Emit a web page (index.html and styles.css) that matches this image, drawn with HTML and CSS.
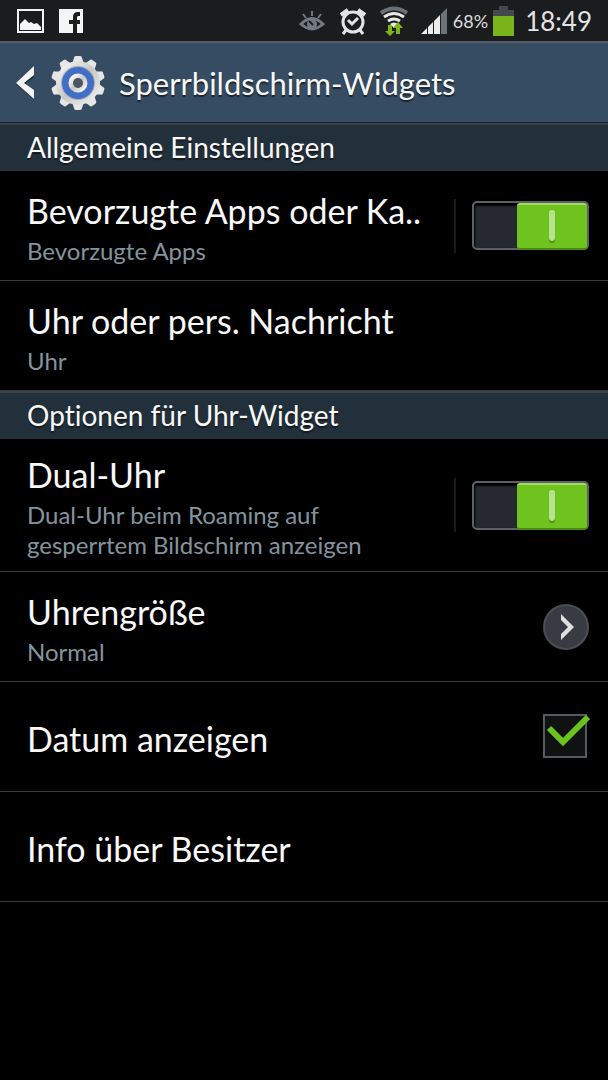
FILE: index.html
```html
<!DOCTYPE html>
<html lang="de">
<head>
<meta charset="utf-8">
<meta name="viewport" content="width=device-width, initial-scale=1">
<title>Sperrbildschirm-Widgets</title>
<link rel="stylesheet" href="styles.css">
</head>
<body>
<div class="status">
  <div class="status-group notices">
    <svg width="28" height="26" viewBox="0 0 28 26" aria-label="Bild"><path fill="#f4f4f4" fill-rule="evenodd" d="M1 1h27v24H1zM3 3v20h23V3z"/><path fill="#f4f4f4" d="M4 22v-6l5-5 4 4 2-1 3 2 3-1 4 4v3z"/></svg>
    <svg width="24" height="26" viewBox="0 0 24 26" aria-label="Facebook"><path fill="#f4f4f4" d="M0 1h24v24H0z"/><path fill="#1b1c1e" d="M14 25v-9h-4v-4h4v-3q0-5 5-5h2v4h-2q-1 0-1 2v2h3v4h-3v9z"/></svg>
  </div>
  <div class="status-group indicators">
    <svg width="26" height="26" viewBox="0 0 26 26" fill="none" stroke="#737a82" stroke-width="2"><path d="M2 16Q13 5 24 16 13 26 2 16Z" stroke-width="3"/><circle cx="13" cy="16" r="4" fill="#737a82"/><path d="M13 3v5M4 6l3 4M22 6l-3 4"/><path stroke="#1b1c1e" d="M10 13l4 4"/></svg>
    <svg class="alarm" width="28" height="30" viewBox="0 0 28 30" fill="none" stroke="#e4e4e4"><circle cx="14" cy="16" r="10" stroke-width="3"/><path stroke-width="3" d="M9 14l4 4 6-6M7 24l-3 4M21 24l3 4"/><path stroke-width="4" d="M2 9l7-5M26 9l-7-5"/></svg>
    <svg class="wifi" width="30" height="32" viewBox="0 0 30 32" fill="none" stroke="#e8e8e8" stroke-width="3"><path stroke="#687078" stroke-width="4" d="M2 8Q15-1 28 8"/><path d="M5 12q10-7 20 0M9 16q6-4 12 0"/><path fill="#e8e8e8" stroke="none" d="M11 19q4-3 8 0l-4 4z"/><path fill="#7fb51b" stroke="none" d="M9 20h4v6h3l-5 5-5-5h3zM17 29v-6h-3l5-6 5 6h-3v6z"/></svg>
    <svg class="signal" width="27" height="28" viewBox="0 0 27 28"><path fill="#ececec" d="M0 27l6-6v6zM7 20l5-5v12H7zM13 14l6-6v19h-6z"/><path fill="#6b737b" d="M20 7l6-6v26h-6z"/></svg>
    <span class="percent">68%</span>
    <svg class="battery" width="21" height="30" viewBox="0 0 21 30"><path fill="#43484c" d="M0 4h6V0h9v4h6v26H0z"/><path fill="#79b41a" d="M0 10h21v20H0z"/></svg>
    <time class="clock">18:49</time>
  </div>
</div>
<header class="bar">
  <button class="back" type="button" aria-label="Zurück"><svg width="20" height="34" viewBox="0 0 20 34"><path fill="#1d2b39" d="M18 2v9l-9 7 9 7v9L0 18z"/><path fill="#f4f4f4" d="M18 0v9L8 17l10 7v9L0 17z"/></svg></button>
  <svg class="gear" width="54" height="54" viewBox="-27 -27 54 54"><defs><linearGradient id="metal" x1="0" y1="0" x2="1" y2="1"><stop offset="0" stop-color="#fff"/><stop offset=".5" stop-color="#c8c8c8"/><stop offset="1" stop-color="#f4f4f4"/></linearGradient><path id="tooth" d="M-6-19l2-6q0-2 2-2h4q2 0 2 2l2 6z"/></defs><g fill="#e6e6e6"><use href="#tooth"/><use href="#tooth" transform="rotate(36)"/><use href="#tooth" transform="rotate(72)"/><use href="#tooth" transform="rotate(108)"/><use href="#tooth" transform="rotate(144)"/><use href="#tooth" transform="rotate(180)"/><use href="#tooth" transform="rotate(216)"/><use href="#tooth" transform="rotate(252)"/><use href="#tooth" transform="rotate(288)"/><use href="#tooth" transform="rotate(324)"/></g><circle r="22" fill="url(#metal)"/><circle r="17" fill="#a9adb4"/><circle r="16" fill="#426fc6"/><circle r="7" fill="none" stroke="url(#metal)" stroke-width="5"/><circle r="5" fill="#4b5664"/></svg>
  <h1 class="title">Sperrbildschirm-Widgets</h1>
</header>
<main>
  <section>
    <h2 class="section-title">Allgemeine Einstellungen</h2>
    <div class="row">
      <label class="text" for="favorites"><span class="name">Bevorzugte Apps oder Ka..</span><span class="detail">Bevorzugte Apps</span></label>
      <span class="switch-area"><input class="switch" id="favorites" type="checkbox" role="switch" checked></span>
    </div>
    <button class="row" type="button"><span class="text"><span class="name">Uhr oder pers. Nachricht</span><span class="detail">Uhr</span></span></button>
  </section>
  <section>
    <h2 class="section-title">Optionen für Uhr-Widget</h2>
    <div class="row">
      <label class="text" for="dual"><span class="name">Dual-Uhr</span><span class="detail">Dual-Uhr beim Roaming auf gesperrtem Bildschirm anzeigen</span></label>
      <span class="switch-area"><input class="switch" id="dual" type="checkbox" role="switch" checked></span>
    </div>
    <button class="row" type="button"><span class="text"><span class="name">Uhrengröße</span><span class="detail">Normal</span></span>
      <svg width="46" height="46" viewBox="0 0 46 46"><circle cx="23" cy="23" r="22" fill="#383c42" stroke="#4a4f55" stroke-width="2"/><path fill="#dedede" d="M18 10l13 13-13 13v-6l7-7-7-7z"/></svg></button>
    <div class="row">
      <label class="text" for="date"><span class="name">Datum anzeigen</span></label>
      <span class="check-area"><input class="check" id="date" type="checkbox" checked><svg class="tick" width="48" height="46" viewBox="0 0 48 46"><path fill="none" stroke="#6cc31d" stroke-width="6" d="M6 14l14 14L45 3"/></svg></span>
    </div>
    <button class="row" type="button"><span class="text"><span class="name">Info über Besitzer</span></span></button>
  </section>
</main>
</body>
</html>
```

FILE: styles.css
```css
* { box-sizing: border-box; }
body { margin: 0; min-height: 100vh; background: #000; color: #f8f8f8; font-family: Lato, "Open Sans", sans-serif; font-variant-ligatures: none; }
button { font: inherit; color: inherit; background: none; border: 0; padding: 0; text-align: left; cursor: pointer; }
svg { display: block; flex: none; }
h1, h2 { margin: 0; font-weight: 400; text-shadow: 0 2px 1px #111a; }

.status { display: flex; justify-content: space-between; height: 43px; padding: 0 16px; background: #1b1c1e; border-bottom: 2px solid #555b65; }
.status-group { display: flex; align-items: center; }
.notices { gap: 15px; }
.alarm { margin-left: 14px; }
.wifi { margin-left: 12px; }
.signal { margin-left: 12px; }
.percent { margin-left: 5px; font-size: 18px; color: #ddd; }
.battery { margin-left: 5px; }
.clock { margin-left: 11px; font-size: 26px; color: #e4e4e4; }

.bar { display: flex; align-items: center; height: 80px; padding: 0 16px; background: #354c62; border-bottom: 1px solid #20242a; }
.back { width: 20px; }
.gear { margin-left: 15px; }
.title { margin-left: 14px; font-size: 31px; line-height: 40px; }

.section-title { height: 48px; padding: 0 27px; font-size: 28px; line-height: 44px; background: #22303c; border-top: 2px solid #37444e; }
.row { display: flex; align-items: center; width: 100%; min-height: 110px; padding: 0 19px 0 27px; border-bottom: 1px solid #3b3b3b; }
.text { display: flex; flex: 1; flex-direction: column; gap: 4px; min-width: 0; padding: 15px 0 11px; }
.name { font-size: 34px; line-height: 42px; white-space: nowrap; }
.detail { max-width: 380px; font-size: 24px; line-height: 30px; color: #84949e; }

.switch-area { display: flex; align-items: center; flex: none; height: 54px; padding-left: 16px; border-left: 2px solid #1a1a1c; }
.switch { position: relative; width: 117px; height: 49px; margin: 0; appearance: none; border: 2px solid #5c6168; border-radius: 5px; background: #262930; box-shadow: inset 0 2px 2px 1px #000; cursor: pointer; }
.switch::before { content: ""; position: absolute; top: 0; right: 0; width: 70px; height: 43px; border-radius: 3px; background: #6fc31e; border-top: 2px solid #a2da62; border-bottom: 2px solid #4c8815; }
.switch::after { content: ""; position: absolute; top: 7px; right: 32px; width: 6px; height: 31px; border-radius: 3px; background: #b9e28c; box-shadow: 0 2px 1px #4c8815; }

.check-area { display: grid; flex: none; margin-right: -2px; }
.check { grid-area: 1 / 1; width: 44px; height: 44px; margin: 0; appearance: none; border: 2px solid #555a60; background: #101211; cursor: pointer; }
.tick { grid-area: 1 / 1; pointer-events: none; z-index: 1; }
```
